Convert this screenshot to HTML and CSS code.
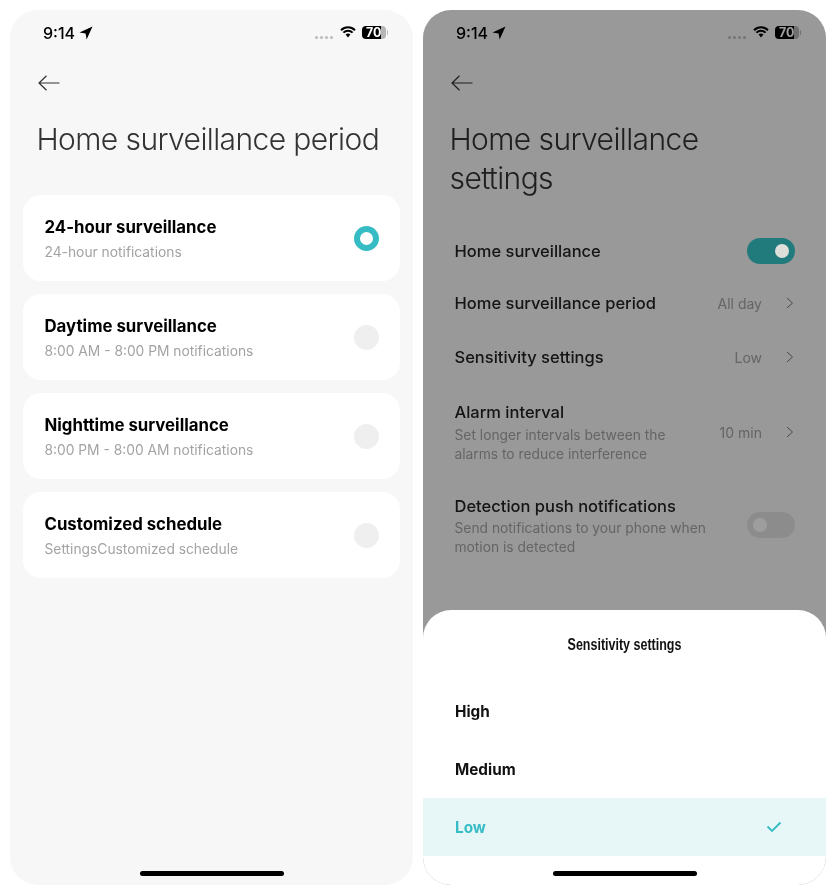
FILE: index.html
```html
<!DOCTYPE html>
<html lang="en">
<head>
    <meta charset="UTF-8">
    <meta name="viewport" content="width=device-width, initial-scale=1.0">
    <title>Home surveillance</title>
    <link rel="stylesheet" href="styles.css">
</head>
<body>
    <div class="screens">
        <!-- period screen -->
        <div class="phone">
            <div class="status">
                <span class="time">9:14</span>
                <svg class="loc" width="14" height="14" viewBox="0 0 14 14"><path d="M13.5 .5 L.5 6.4 L6.6 7.4 L7.6 13.5 Z" fill="#000"/></svg>
                <span class="spacer"></span>
                <span class="dots"><i></i><i></i><i></i><i></i></span>
                <svg class="wifi" width="16" height="12" viewBox="0 0 16 12"><path d="M1 4.2 A10 10 0 0 1 15 4.2 M3.4 6.6 A6.6 6.6 0 0 1 12.6 6.6" fill="none" stroke="#000" stroke-width="2"/><path d="M5.6 8.6 A3.4 3.4 0 0 1 10.4 8.6 L8 11.6 Z" fill="#000"/></svg>
                <span class="battery"><span class="battery-num">70</span></span>
            </div>
            <svg class="back" width="22" height="16" viewBox="0 0 22 16"><path d="M21.5 8 H1 M8.5 .8 L1 8 L8.5 15.2" fill="none" stroke="#333" stroke-width="1.2"/></svg>
            <h1 class="page-title">Home surveillance period</h1>
            <div class="cards">
                <div class="card">
                    <div class="card-text">
                        <div class="card-title">24-hour surveillance</div>
                        <div class="card-sub">24-hour notifications</div>
                    </div>
                    <span class="radio radio-on"></span>
                </div>
                <div class="card">
                    <div class="card-text">
                        <div class="card-title">Daytime surveillance</div>
                        <div class="card-sub">8:00 AM - 8:00 PM notifications</div>
                    </div>
                    <span class="radio"></span>
                </div>
                <div class="card">
                    <div class="card-text">
                        <div class="card-title">Nighttime surveillance</div>
                        <div class="card-sub">8:00 PM - 8:00 AM notifications</div>
                    </div>
                    <span class="radio"></span>
                </div>
                <div class="card">
                    <div class="card-text">
                        <div class="card-title">Customized schedule</div>
                        <div class="card-sub">SettingsCustomized schedule</div>
                    </div>
                    <span class="radio"></span>
                </div>
            </div>
            <div class="home-bar"></div>
        </div>

        <!-- settings screen with sheet open -->
        <div class="phone">
            <div class="status">
                <span class="time">9:14</span>
                <svg class="loc" width="14" height="14" viewBox="0 0 14 14"><path d="M13.5 .5 L.5 6.4 L6.6 7.4 L7.6 13.5 Z" fill="#000"/></svg>
                <span class="spacer"></span>
                <span class="dots"><i></i><i></i><i></i><i></i></span>
                <svg class="wifi" width="16" height="12" viewBox="0 0 16 12"><path d="M1 4.2 A10 10 0 0 1 15 4.2 M3.4 6.6 A6.6 6.6 0 0 1 12.6 6.6" fill="none" stroke="#000" stroke-width="2"/><path d="M5.6 8.6 A3.4 3.4 0 0 1 10.4 8.6 L8 11.6 Z" fill="#000"/></svg>
                <span class="battery"><span class="battery-num">70</span></span>
            </div>
            <svg class="back" width="22" height="16" viewBox="0 0 22 16"><path d="M21.5 8 H1 M8.5 .8 L1 8 L8.5 15.2" fill="none" stroke="#333" stroke-width="1.2"/></svg>
            <h1 class="page-title settings-title">Home surveillance settings</h1>
            <div class="settings">
                <div class="row row-first">
                    <div class="row-text"><div class="row-title">Home surveillance</div></div>
                    <span class="toggle toggle-on"></span>
                </div>
                <div class="row row-period">
                    <div class="row-text"><div class="row-title">Home surveillance period</div></div>
                    <span class="row-value">All day</span>
                    <svg class="chev" width="8" height="12" viewBox="0 0 8 12"><path d="M1 1 L6.5 6 L1 11" fill="none" stroke="#777" stroke-width="1"/></svg>
                </div>
                <div class="row row-sens">
                    <div class="row-text"><div class="row-title">Sensitivity settings</div></div>
                    <span class="row-value">Low</span>
                    <svg class="chev" width="8" height="12" viewBox="0 0 8 12"><path d="M1 1 L6.5 6 L1 11" fill="none" stroke="#777" stroke-width="1"/></svg>
                </div>
                <div class="row row-alarm">
                    <div class="row-text">
                        <div class="row-title">Alarm interval</div>
                        <div class="row-sub">Set longer intervals between the alarms to reduce interference</div>
                    </div>
                    <span class="row-value">10 min</span>
                    <svg class="chev" width="8" height="12" viewBox="0 0 8 12"><path d="M1 1 L6.5 6 L1 11" fill="none" stroke="#777" stroke-width="1"/></svg>
                </div>
                <div class="row row-push">
                    <div class="row-text">
                        <div class="row-title">Detection push notifications</div>
                        <div class="row-sub">Send notifications to your phone when motion is detected</div>
                    </div>
                    <span class="toggle toggle-off"></span>
                </div>
            </div>
            <div class="scrim"></div>
            <div class="sheet">
                <div class="sheet-title">Sensitivity settings</div>
                <div class="option">High</div>
                <div class="option">Medium</div>
                <div class="option option-on">
                    Low
                    <svg width="16" height="12" viewBox="0 0 16 12"><path d="M1.5 5.5 L6 10 L14.5 1.5" fill="none" stroke="#36bcc4" stroke-width="1.8"/></svg>
                </div>
            </div>
            <div class="home-bar"></div>
        </div>
    </div>
</body>
</html>
```

FILE: styles.css
```css
body {
    margin: 0;
    padding: 10px;
    background-color: #fff;
    font-family: Inter, "Noto Sans", sans-serif;
}
.screens {
    display: flex;
    gap: 10px;
}
.phone {
    position: relative;
    width: 403px;
    height: 875px;
    background-color: #f7f7f7;
    border-radius: 28px;
    overflow: hidden;
    color: #000;
    filter: blur(0.35px);
}
.status {
    display: flex;
    align-items: center;
    height: 16px;
    padding: 15px 26px 0 33px;
}
.time {
    font-size: 16px;
    font-weight: 500;
    line-height: 16px;
}
.loc {
    margin-left: 4px;
}
.spacer {
    flex: 1;
}
.dots {
    display: flex;
    gap: 2px;
    margin-top: 8px;
    margin-right: 7px;
}
.dots i {
    width: 3px;
    height: 3px;
    border-radius: 50%;
    background-color: #bdbdbd;
}
.wifi {
    margin-right: 6px;
    margin-top: -2px;
}
.battery {
    position: relative;
    width: 24px;
    height: 13px;
    border-radius: 4px;
    background: linear-gradient(90deg, #000 78%, #b5b5b5 78%);
    color: #fff;
    margin-top: -1px;
    margin-right: 1px;
}
.battery::after {
    content: "";
    position: absolute;
    top: 4px;
    right: -2px;
    width: 1px;
    height: 5px;
    border-radius: 1px;
    background-color: #bbb;
}
.battery-num {
    display: block;
    padding-left: 4px;
    font-size: 12.5px;
    font-weight: 700;
    line-height: 13px;
}
.back {
    display: block;
    margin: 34px 0 0 28px;
}
.page-title {
    margin: 29px 0 0 26.5px;
    font-size: 30px;
    font-weight: 300;
    line-height: 39px;
    letter-spacing: -0.6px;
    color: #333;
}
.settings-title {
    width: 300px;
}
.cards {
    display: flex;
    flex-direction: column;
    gap: 13px;
    margin: 36px 13px 0;
}
.card {
    display: flex;
    align-items: center;
    height: 86px;
    padding: 0 21px 0 21.5px;
    background-color: #fff;
    border-radius: 18px;
}
.card-text {
    flex: 1;
    padding-top: 2px;
}
.card-title {
    font-size: 16.8px;
    font-weight: 700;
    line-height: 22px;
}
.card-sub {
    margin-top: 4px;
    font-size: 13.8px;
    line-height: 20px;
    color: #a3a3a3;
}
.radio {
    width: 25px;
    height: 25px;
    border-radius: 50%;
    background-color: #efefef;
    box-sizing: border-box;
}
.radio-on {
    background-color: #fff;
    border: 6px solid #36bcc4;
}
.home-bar {
    position: absolute;
    left: 130px;
    bottom: 9px;
    width: 144px;
    height: 5px;
    border-radius: 3px;
    background-color: #000;
}

/* settings screen */
.settings {
    margin: 0 31px 0 31.5px;
}
.row {
    display: flex;
    align-items: center;
}
.row-first {
    margin-top: 40px;
    height: 26px;
}
.row-period {
    margin-top: 26px;
    height: 26px;
}
.row-sens {
    margin-top: 28px;
    height: 26px;
}
.row-alarm {
    margin-top: 31px;
}
.row-push {
    margin-top: 31px;
}
.row-text {
    flex: 1;
}
.row-title {
    font-size: 16.5px;
    font-weight: 500;
    line-height: 22px;
    color: #222;
}
.row-sub {
    width: 252px;
    margin-top: 2.5px;
    font-size: 13.8px;
    line-height: 19px;
    color: #a3a3a3;
}
.row-value {
    font-size: 14px;
    color: #a3a3a3;
    margin-right: 24px;
}
.chev {
    margin-right: 1px;
}
.toggle {
    position: relative;
    width: 48px;
    height: 26px;
    border-radius: 13px;
    background-color: #e3e3e3;
}
.toggle-off {
    margin-top: -2px;
}
.toggle::after {
    content: "";
    position: absolute;
    top: 6px;
    left: 6px;
    width: 14px;
    height: 14px;
    border-radius: 50%;
    background-color: #fff;
}
/* knob stays bright through the dimmed layer, so this one sits above the scrim */
.toggle-on {
    z-index: 1;
    background-color: #217b7d;
}
.toggle-on::after {
    left: 28px;
    background-color: #dededa;
}
.scrim {
    position: absolute;
    inset: 0;
    background-color: rgba(0, 0, 0, 0.38);
}
.sheet {
    position: absolute;
    left: 0;
    right: 0;
    top: 600px;
    bottom: 0;
    background-color: #fff;
    border-radius: 28px 28px 0 0;
}
.sheet-title {
    margin-top: 24px;
    font-family: "Liberation Sans", sans-serif;
    font-size: 17px;
    font-weight: 700;
    line-height: 22px;
    text-align: center;
    color: #111;
    transform: scaleX(0.735);
}
.sheet-title + .option {
    margin-top: 26px;
}
.option {
    display: flex;
    align-items: center;
    justify-content: space-between;
    height: 58px;
    padding: 0 44px 0 32px;
    font-size: 15.3px;
    font-weight: 700;
    color: #111;
}
.option-on {
    background-color: #e7f6f7;
    color: #36bcc4;
}
```
